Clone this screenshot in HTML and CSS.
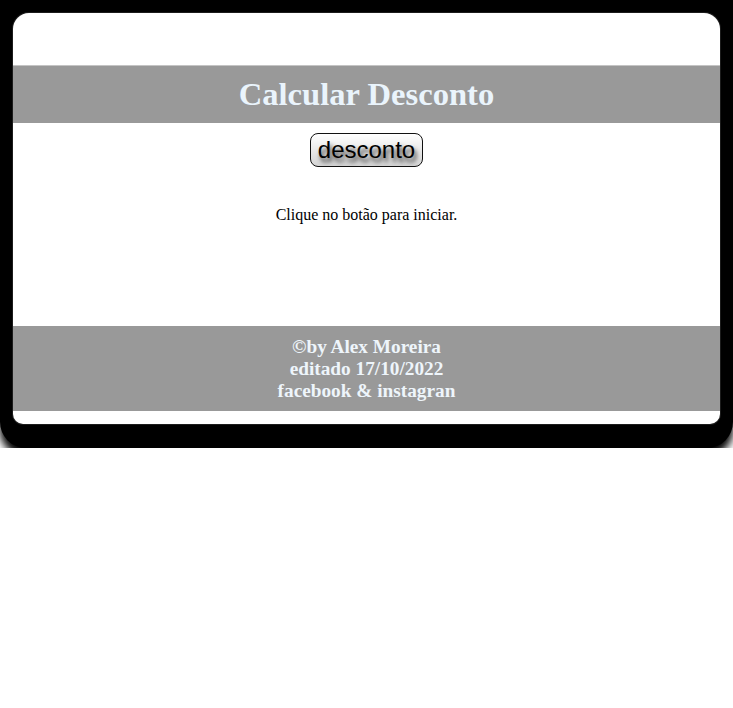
FILE: index.html
```html
<!DOCTYPE html>
<html lang="pt-BR">
<head>
<meta charset="utf-8">
<title>Calcular Desconto</title>
<link rel="stylesheet" href="styles.css">
</head>
<body>
<div class="frame">
  <main class="card">
    <h1 class="title">Calcular Desconto</h1>
    <div class="actions">
      <button class="btn" type="button">desconto</button>
    </div>
    <p class="msg">Clique no botão para iniciar.</p>
    <footer class="foot">
      <div>©by Alex Moreira</div>
      <div>editado 17/10/2022</div>
      <div>facebook &amp; instagran</div>
    </footer>
  </main>
</div>
</body>
</html>
```
FILE: styles.css
```css
html, body {
  margin: 0;
  padding: 0;
  background: #fff;
}
body {
  font-family: "Liberation Serif", "Times New Roman", serif;
}
.frame {
  background: #000;
  padding: 13px 13px 24px 13px;
  border-radius: 0 0 26px 26px;
  box-shadow: 0 8px 9px #000;
}
.card {
  background: #fff;
  border-radius: 16px 16px 10px 10px;
  box-shadow: 0 0 0 1px #1c1c1c;
  padding: 52px 0 13px;
  display: flex;
  flex-direction: column;
}
.title {
  margin: 0;
  height: 58px;
  line-height: 56px;
  background: #999;
  border-top: 1px solid #c4c4c4;
  box-sizing: border-box;
  color: #eaf4fc;
  font-size: 32.6px;
  font-weight: bold;
  text-align: center;
}
.actions {
  display: flex;
  justify-content: center;
  margin-top: 10px;
}
.btn {
  font-family: "Liberation Sans", Arial, sans-serif;
  font-size: 24px;
  height: 34px;
  padding: 0 7px;
  border: 1px solid #111;
  border-radius: 8px;
  background: linear-gradient(#ffffff, #d4d4d4);
  color: #000;
  text-shadow: 2px 4px 4px #333;
  line-height: 30px;
}
.msg {
  margin: 38px 0 0;
  font-size: 16px;
  line-height: 20px;
  text-align: center;
  color: #000;
}
.foot {
  margin-top: 101px;
  background: #999;
  color: #eef5fb;
  font-weight: bold;
  font-size: 19.3px;
  line-height: 22px;
  text-align: center;
  padding: 10px 0 9px;
}
```
